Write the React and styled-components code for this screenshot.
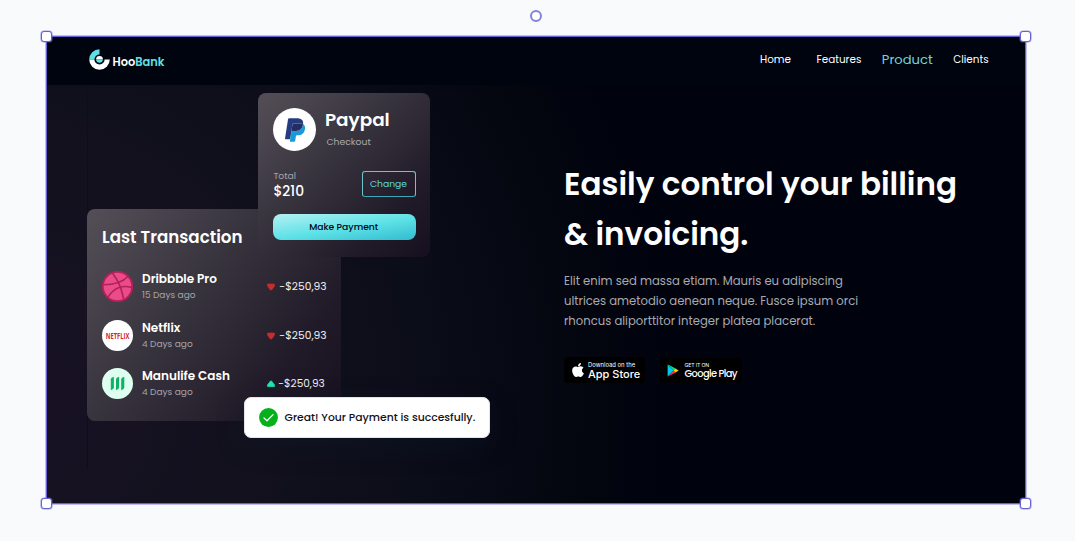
import React from "react";
import styled, { createGlobalStyle } from "styled-components";
import { FaApple } from "react-icons/fa";

const Global = createGlobalStyle`
  * { box-sizing: border-box; }
  body { margin: 0; background: #f8fafc; font-family: Poppins, Inter, sans-serif; }
  h1, h2, h3, p { margin: 0; }
`;

const Canvas = styled.div`
  width: 1075px;
  height: 541px;
  padding: 36px 49px 37px 46px;
  background: #f8fafc;
  position: relative;
  overflow: hidden;
`;

const Frame = styled.div`
  position: relative;
  width: 980px;
  height: 468px;
  border: 1px solid #6661d3;
  box-shadow: 0 0 0 1px rgba(105, 101, 219, 0.4);
  background: #00040f;
  display: flex;
  flex-direction: column;
`;

const Handle = styled.span`
  position: absolute;
  width: 11px;
  height: 11px;
  border-radius: 3px;
  background: #fff;
  border: 1px solid #6661d3;
  box-shadow: 0 0 0 0.6px rgba(105, 101, 219, 0.6);
  ${(p) => (p.$v === "top" ? "top: -6.5px;" : "bottom: -6px;")}
  ${(p) => (p.$h === "left" ? "left: -6.5px;" : "right: -6px;")}
`;

const RotateHandle = styled.span`
  position: absolute;
  left: 530px;
  top: 10px;
  width: 12px;
  height: 12px;
  border-radius: 50%;
  background: #fff;
  border: 2px solid #8481dd;
`;

const Navbar = styled.header`
  height: 48px;
  padding: 0 37px 2px 42px;
  display: flex;
  align-items: center;
  justify-content: space-between;
  background: #00040f;
`;

const Brand = styled.div`
  display: flex;
  align-items: center;
  gap: 2.5px;
  font-weight: 600;
  font-size: 11.4px;
  line-height: 20px;
  color: #fff;
  svg { margin-bottom: 2px; }
  span { padding-top: 3px; }
  b { font-weight: 600; color: #5ce1e6; }
`;

const Links = styled.nav`
  display: flex;
  align-items: center;
`;

const NavLink = styled.a`
  font-size: ${(p) => (p.$active ? 13.1 : 10.4)}px;
  line-height: 20px;
  margin-left: ${(p) => p.$ml}px;
  position: relative;
  left: 0.6px;
  color: ${(p) => (p.$active ? "#75d4da" : "#fff")};
`;

const Hero = styled.main`
  flex: 1;
  display: flex;
  padding: 0 0 0 40px;
  background:
    radial-gradient(ellipse 640px 680px at -20px 310px, #181224 0%, #12111d 38%, #0b0d19 62%, #03050f 88%, rgba(0, 3, 14, 0) 100%),
    #00030e;
`;

const Art = styled.section`
  position: relative;
  width: 476px;
  height: 384px;
  padding-top: 124px;
  border-left: 1px solid #0e0d19;
`;

const Glass = styled.div`
  border-radius: 8px;
  background: linear-gradient(${(p) => p.$angle}deg, #544f57 0%, #37333d 42%, #211b29 76%, #160f1f 100%);
`;

const TransactionCard = styled(Glass)`
  width: 254px;
  height: 212px;
  margin-left: -1px;
  padding: 16px 15px;
  border-radius: 8px 0 0 8px;
`;

const CardTitle = styled.h2`
  font-weight: 600;
  font-size: 16.7px;
  line-height: 25px;
  color: #fff;
  margin-bottom: 12.5px;
`;

const Row = styled.div`
  height: 48.5px;
  display: grid;
  grid-template-columns: 31px 1fr 59.5px;
  column-gap: 9px;
  align-items: center;
`;

const Avatar = styled.div`
  width: ${(p) => p.$size || 31}px;
  height: ${(p) => p.$size || 31}px;
  flex: none;
  border-radius: 50%;
  background: ${(p) => p.$bg || "#fff"};
  display: flex;
  align-items: center;
  justify-content: center;
  svg { display: block; }
`;

const Name = styled.h3`
  padding-top: 1px;
  font-weight: 600;
  font-size: 12.05px;
  line-height: 16.3px;
  color: #fff;
  white-space: nowrap;
`;

const Muted = styled.p`
  font-size: 9.02px;
  line-height: 16px;
  color: #a5a3a9;
`;

const Amount = styled.div`
  display: flex;
  align-items: center;
  gap: ${(p) => (p.$up ? 3.8 : 4.8)}px;
  padding-top: 1px;
  font-size: ${(p) => (p.$up ? 10.5 : 10.7)}px;
  line-height: 16px;
  color: #f1f0f2;
  white-space: nowrap;
  svg { display: block; flex: none; }
`;

const PayCard = styled(Glass)`
  position: absolute;
  left: 170px;
  top: 8px;
  width: 172px;
  height: 164px;
  padding: 15px 14px 0 15.4px;
  display: flex;
  flex-direction: column;
`;

const PayHead = styled.div`
  display: flex;
  gap: 8.5px;
`;

const PayTitle = styled.h2`
  padding-top: 1px;
  font-weight: 600;
  font-size: 18.4px;
  line-height: 22px;
  color: #fff;
`;

const PaySub = styled.p`
  margin-left: 1.5px;
  font-size: 9.25px;
  line-height: 22px;
  color: #aaa8ae;
`;

const PayTotals = styled.div`
  margin-top: 18px;
  display: flex;
  justify-content: space-between;
  align-items: flex-start;
`;

const Total = styled.p`
  margin-top: -3px;
  font-size: 9.2px;
  line-height: 15px;
  color: #a5a3a9;
`;

const Sum = styled.p`
  font-weight: 500;
  font-size: 13.8px;
  line-height: 17px;
  color: #fff;
`;

const ChangeButton = styled.button`
  width: 54px;
  height: 26px;
  padding: 0 1px 0 0;
  font: 400 9.2px/20px Poppins, Inter, sans-serif;
  color: #5fd9df;
  background: transparent;
  border: 1px solid #6cc5cd;
  border-bottom-color: #3fa6b6;
  border-radius: 3px;
`;

const PayButton = styled.button`
  margin-top: 14.3px;
  height: 25.7px;
  padding: 0 2px 0 0;
  border: 0;
  border-radius: 8px;
  font: 500 9.2px/20px Poppins, Inter, sans-serif;
  color: #00040f;
  background: linear-gradient(171deg, #b4f1f3 0%, #5ce1e6 54%, #33bbcf 100%);
`;

const Toast = styled.div`
  position: absolute;
  left: 155.6px;
  top: 312px;
  width: 246px;
  height: 41px;
  padding-left: 14px;
  display: flex;
  align-items: center;
  gap: 7px;
  background: #fff;
  border: 1px solid #e4e4e8;
  border-radius: 7px;
  box-shadow: 0 8px 26px rgba(16, 26, 42, 0.4);
  font-weight: 500;
  font-size: 10.8px;
  color: #12101c;
  white-space: nowrap;
  line-height: 17px;
`;

const Copy = styled.section`
  padding: 74px 0 0 1px;
  width: 410px;
`;

const Heading = styled.h1`
  font-weight: 600;
  font-size: 31px;
  line-height: 50px;
  color: #fff;
`;

const Paragraph = styled.p`
  margin-top: 12px;
  font-size: 11.65px;
  line-height: 20px;
  color: #a9aaaf;
`;

const Stores = styled.div`
  margin-top: 26px;
  display: flex;
  align-items: center;
  gap: 14.5px;
`;

const StoreBadge = styled.a`
  width: ${(p) => p.$w}px;
  height: ${(p) => p.$h}px;
  padding-left: ${(p) => p.$pl}px;
  display: flex;
  align-items: center;
  gap: ${(p) => p.$gap}px;
  background: #000;
  border-radius: 4px;
  color: #fff;
  svg { display: block; flex: none; }
`;

const StoreText = styled.div`
  display: flex;
  flex-direction: column;
  padding-top: 1px;
  font-family: ${(p) => p.$font};
  font-weight: 500;
  white-space: nowrap;
  small {
    font-family: Inter, sans-serif;
    font-weight: 400;
    font-size: ${(p) => p.$small}px;
    letter-spacing: ${(p) => p.$smallSpacing || 0}px;
    line-height: 6px;
  }
  span {
    font-size: ${(p) => p.$size}px;
    letter-spacing: ${(p) => p.$spacing || 0}px;
    line-height: 12px;
  }
`;

const BrandMark = () => (
  <svg width="21" height="21" viewBox="0 0 21 21">
    <path d="M0.2 10.5A10.3 10.3 0 0 1 10.5 0.2V5.4A5.1 5.1 0 0 0 5.4 10.5Z" fill="#5ce1e6" />
    <path d="M0.2 10.5H5.4A5.1 5.1 0 0 0 15.6 10.5H20.8A10.3 10.3 0 0 1 0.2 10.5Z" fill="#fff" />
    <path d="M7.1 10.3A3.4 3.4 0 0 1 13.9 10.3Z" fill="#fff" />
    <path d="M7.1 10.3A3.4 3.4 0 0 0 13.9 10.3Z" fill="#5ce1e6" />
  </svg>
);

const PaypalMark = () => (
  <svg width="20" height="24" viewBox="0 0 25.5 30.2">
    <path fill="#253b80" d="M9.614 7.699c.061-.393.313-.714.652-.876.155-.074.326-.115.507-.115h7.352c.871 0 1.684.057 2.426.177.212.034.418.073.619.117.2.045.395.095.584.15.094.028.187.057.277.086.365.121.704.264 1.017.429.368-2.347-.003-3.945-1.272-5.392C20.378.682 17.853 0 14.622 0h-9.38c-.66 0-1.223.48-1.325 1.133L.01 25.898c-.077.49.301.932.795.932h5.791l1.454-9.225z" />
    <path fill="#179bd7" d="M23.048 7.667c-.028.179-.06.362-.096.55-1.237 6.351-5.469 8.545-10.874 8.545H9.326c-.661 0-1.218.48-1.321 1.132L6.596 26.83l-.399 2.533c-.067.428.263.814.695.814h4.881c.578 0 1.069-.42 1.16-.99l.048-.248.919-5.832.059-.32c.09-.572.582-.992 1.16-.992h.73c4.729 0 8.431-1.92 9.513-7.476.452-2.321.218-4.259-.978-5.622-.362-.412-.811-.753-1.336-1.03z" />
    <path fill="#222d65" d="M21.754 7.151c-.189-.055-.384-.105-.584-.15-.201-.044-.407-.083-.619-.117-.742-.12-1.555-.177-2.426-.177h-7.352c-.181 0-.353.041-.507.115-.339.163-.591.484-.652.877L8.05 17.605l-.045.289c.103-.652.66-1.132 1.321-1.132h2.752c5.405 0 9.637-2.195 10.874-8.545.037-.188.068-.371.096-.55-.313-.166-.652-.308-1.017-.429-.09-.03-.183-.059-.277-.087z" />
  </svg>
);

const DribbbleMark = () => (
  <svg width="31" height="31" viewBox="0 0 24 24" fill="none" stroke="#b2215a" strokeWidth="1.25">
    <circle cx="12" cy="12" r="11.3" fill="#ea4c89" />
    <path d="M8.1 1.5c4.6 6.5 6.5 10.3 8.6 20" />
    <path d="M19.9 4.2C15.8 8.9 9.9 10.6 0.9 10.6" />
    <path d="M23.2 12.7c-4-.9-7.5-.8-10 .1-2.9 1.05-5.9 3.3-8.6 7.4" />
  </svg>
);

const NetflixMark = () => (
  <svg width="31" height="21" viewBox="0 0 31 21">
    <text x="3.7" y="13.6" textLength="23.6" lengthAdjust="spacingAndGlyphs" fontFamily="'Open Sans', sans-serif" fontWeight="700" fontSize="8.8" fill="#d8232c">NETFLIX</text>
  </svg>
);

const ManulifeMark = () => (
  <svg width="15" height="15" viewBox="0 0 15 15" fill="#0fb068">
    <path d="M0.8 3.2Q0.8 1.8 3.9 0.8V11.4Q3.9 13 0.8 14.2Z" />
    <path d="M6 3.2Q6 1.8 9.1 0.8V11.4Q9.1 13 6 14.2Z" />
    <path d="M11.2 3.2Q11.2 1.8 14.3 0.8V11.4Q14.3 13 11.2 14.2Z" />
  </svg>
);

const Arrow = ({ up }) => (
  <svg width="8" height="8" viewBox="0 0 8 8">
    {up ? (
      <path d="M3.6 0.9H4.4L7.4 4.8V6.6H0.6V4.8Z" fill="#1de9b6" stroke="#1de9b6" strokeWidth="0.8" strokeLinejoin="round" />
    ) : (
      <path d="M0.6 1.1H7.4V3.1L4.7 6.9H3.3L0.6 3.1Z" fill="#c52d2f" stroke="#c52d2f" strokeWidth="0.8" strokeLinejoin="round" />
    )}
  </svg>
);

const CheckMark = () => (
  <svg width="19" height="19" viewBox="0 0 19 19">
    <circle cx="9.5" cy="9.5" r="9.4" fill="#04b01b" />
    <path d="M4.9 9.9 8 12.8 14.1 6.6" fill="none" stroke="#fff" strokeWidth="1.3" strokeLinecap="round" strokeLinejoin="round" />
  </svg>
);

const PlayMark = () => (
  <svg width="12" height="13" viewBox="0 0 12 13">
    <path d="M0.6 0.5V12.5L6.6 6.5Z" fill="#00c8f5" />
    <path d="M0.6 0.3 8.6 4.6 6.6 6.6Z" fill="#12d67c" />
    <path d="M0.6 12.7 8.6 8.4 6.6 6.4Z" fill="#f2364b" />
    <path d="M8.5 4.5 11.7 6.5 8.5 8.5 6.5 6.5Z" fill="#ffc90a" />
  </svg>
);

const transactions = [
  { name: "Dribbble Pro", when: "15 Days ago", mark: <DribbbleMark />, bg: "#b2215a" },
  { name: "Netflix", when: "4 Days ago", mark: <NetflixMark />, bg: "#fff" },
  { name: "Manulife Cash", when: "4 Days ago", mark: <ManulifeMark />, bg: "#defff0", up: true },
];

export default function App() {
  return (
    <Canvas>
      <Global />
      <Frame>
        <Navbar>
          <Brand>
            <BrandMark />
            <span>Hoo<b>Bank</b></span>
          </Brand>
          <Links>
            <NavLink>Home</NavLink>
            <NavLink $ml={25.5}>Features</NavLink>
            <NavLink $ml={20.5} $active>Product</NavLink>
            <NavLink $ml={20.5}>Clients</NavLink>
          </Links>
        </Navbar>
        <Hero>
          <Art>
            <TransactionCard $angle={128}>
              <CardTitle>Last Transaction</CardTitle>
              {transactions.map((t) => (
                <Row key={t.name}>
                  <Avatar $bg={t.bg}>{t.mark}</Avatar>
                  <div>
                    <Name>{t.name}</Name>
                    <Muted>{t.when}</Muted>
                  </div>
                  <Amount $up={t.up}>
                    <Arrow up={t.up} />
                    -$250,93
                  </Amount>
                </Row>
              ))}
            </TransactionCard>
            <PayCard $angle={135}>
              <PayHead>
                <Avatar $size={43}><PaypalMark /></Avatar>
                <div>
                  <PayTitle>Paypal</PayTitle>
                  <PaySub>Checkout</PaySub>
                </div>
              </PayHead>
              <PayTotals>
                <div>
                  <Total>Total</Total>
                  <Sum>$210</Sum>
                </div>
                <ChangeButton>Change</ChangeButton>
              </PayTotals>
              <PayButton>Make Payment</PayButton>
            </PayCard>
            <Toast>
              <CheckMark />
              Great! Your Payment is succesfully.
            </Toast>
          </Art>
          <Copy>
            <Heading>Easily control your billing<br />&amp; invoicing.</Heading>
            <Paragraph>
              Elit enim sed massa etiam. Mauris eu adipiscing<br />
              ultrices ametodio aenean neque. Fusce ipsum orci<br />
              rhoncus aliporttitor integer platea placerat.
            </Paragraph>
            <Stores>
              <StoreBadge $w={81} $h={26} $pl={6} $gap={2}>
                <FaApple size={16} />
                <StoreText $font="Inter, sans-serif" $small={5.9} $size={11}>
                  <small>Download on the</small>
                  <span>App Store</span>
                </StoreText>
              </StoreBadge>
              <StoreBadge $w={82} $h={25} $pl={7} $gap={6}>
                <PlayMark />
                <StoreText $font="Poppins, Inter, sans-serif" $small={5.2} $smallSpacing={-0.15} $size={9.9} $spacing={-0.6}>
                  <small>GET IT ON</small>
                  <span>Google Play</span>
                </StoreText>
              </StoreBadge>
            </Stores>
          </Copy>
        </Hero>
        <Handle $v="top" $h="left" />
        <Handle $v="top" $h="right" />
        <Handle $v="bottom" $h="left" />
        <Handle $v="bottom" $h="right" />
      </Frame>
      <RotateHandle />
    </Canvas>
  );
}
